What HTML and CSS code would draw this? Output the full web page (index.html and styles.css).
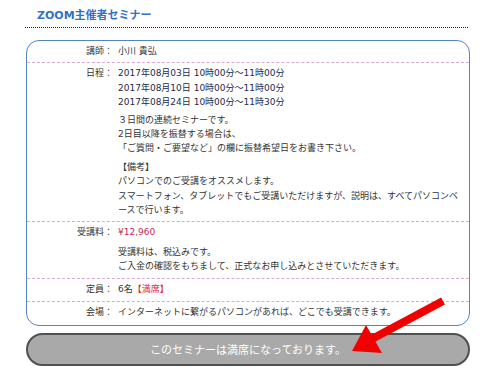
FILE: index.html
```html
<!DOCTYPE html>
<html lang="ja">
<head>
<meta charset="utf-8">
<link rel="stylesheet" href="styles.css">
</head>
<body>
<div class="page">
  <h2 class="title">ZOOM主催者セミナー</h2>
  <div class="box">
    <div class="row">
      <div class="label">講師：</div>
      <div class="val">小川 貴弘</div>
    </div>
    <div class="row">
      <div class="label">日程：</div>
      <div class="val">
        <div class="dates">2017年08月03日 10時00分～11時00分<br>2017年08月10日 10時00分～11時00分<br>2017年08月24日 10時00分～11時30分</div>
        <p class="p1">３日間の連続セミナーです。<br>2日目以降を振替する場合は、<br>「ご質問・ご要望など」の欄に振替希望日をお書き下さい。</p>
        <p class="p2">【備考】<br>パソコンでのご受講をオススメします。<br>スマートフォン、タブレットでもご受講いただけますが、説明は、すべてパソコンベ<br>ースで行います。</p>
      </div>
    </div>
    <div class="row">
      <div class="label">受講料：</div>
      <div class="val">
        <div class="price">¥12,960</div>
        <p class="p3">受講料は、税込みです。<br>ご入金の確認をもちまして、正式なお申し込みとさせていただきます。</p>
      </div>
    </div>
    <div class="row row-lo">
      <div class="label">定員：</div>
      <div class="val">6名<span class="full">【満席】</span></div>
    </div>
    <div class="row row-lo">
      <div class="label">会場：</div>
      <div class="val">インターネットに繋がるパソコンがあれば、どこでも受講できます。</div>
    </div>
  </div>
  <div class="btn">このセミナーは満席になっております。</div>
</div>
<svg class="arrow" width="500" height="379" viewBox="0 0 500 379">
  <line x1="443" y1="301" x2="370" y2="340" stroke="#f20000" stroke-width="8"/>
  <polygon points="352,351 366,325 382,353" fill="#f20000"/>
</svg>
</body>
</html>
```

FILE: styles.css
```css
html, body {
  margin: 0;
  padding: 0;
  background: #fff;
}
body {
  width: 500px;
  height: 379px;
  overflow: hidden;
  position: relative;
  font-family: "DejaVu Sans", "Noto Sans CJK JP", sans-serif;
  font-size: 9px;
  line-height: 14.4px;
  color: #333;
}
.page {
  margin-left: 26px;
  width: 444px;
}
.title {
  margin: 0 2px 0 -1px;
  padding: 9px 0 4px 12px;
  font-size: 11px;
  line-height: 14px;
  font-weight: bold;
  color: #2f72c8;
  border-bottom: 1px dotted #222;
}
.box {
  margin-top: 12px;
  border: 1px solid #5583c2;
  border-radius: 13px;
}
.row {
  display: flex;
  padding: 3px 0 4px;
  border-top: 1px dashed #d9a8d6;
}
.row:first-child {
  border-top: none;
}
.row-lo {
  padding: 3px 0 5px;
}
.label {
  width: 86px;
  flex: none;
  text-align: right;
}
.val {
  margin-left: 5px;
  flex: 1;
}
.dates {
  color: #1e2a48;
}
.val p {
  margin: 0;
}
.p1 {
  padding-top: 3px;
}
.p2 {
  padding-top: 4px;
}
.p3 {
  padding-top: 5px;
}
.price {
  color: #c22b5a;
}
.full {
  color: #e3201b;
}
.btn {
  margin-top: 7px;
  height: 29px;
  line-height: 29px;
  border: 2px solid #505050;
  border-radius: 17px;
  background: #a9a9a9;
  color: #fff;
  font-size: 11px;
  text-align: center;
  font-family: "Noto Sans CJK JP", sans-serif;
}
.arrow {
  position: absolute;
  left: 0;
  top: 0;
  pointer-events: none;
}
```
